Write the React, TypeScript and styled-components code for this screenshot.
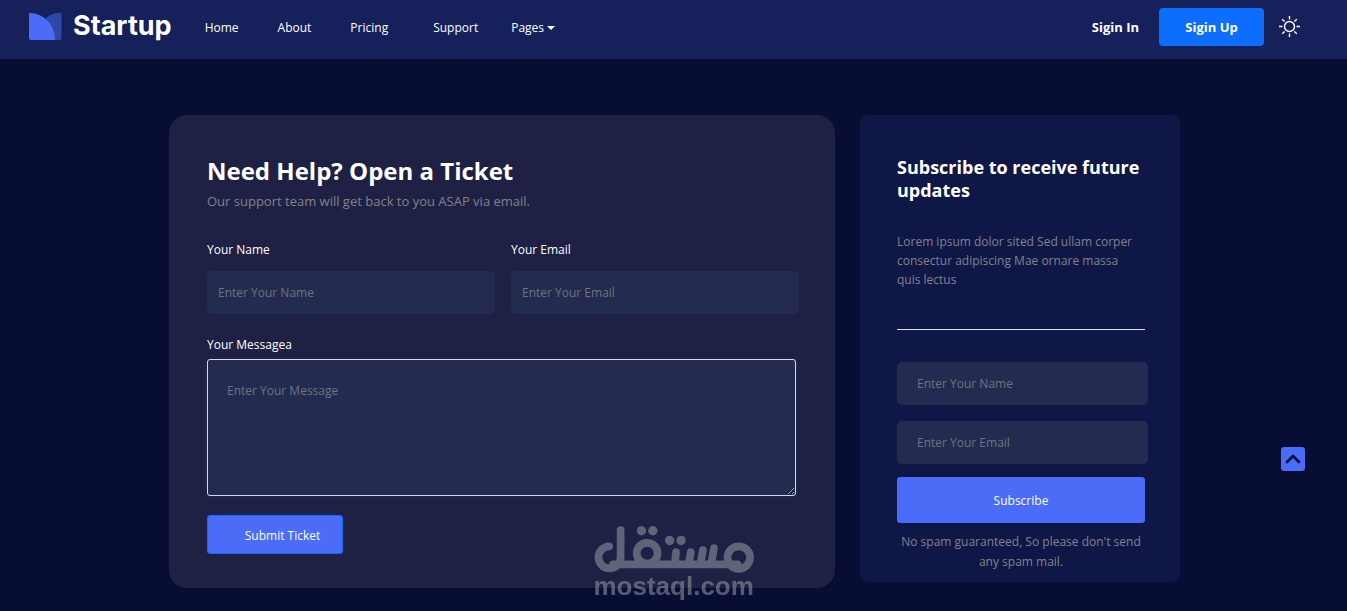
import React from "react";
import styled, { createGlobalStyle } from "styled-components";

const GlobalStyle = createGlobalStyle`
  *, *::before, *::after { box-sizing: border-box; }
  body {
    margin: 0;
    background: #080d33;
    color: #fff;
    font-family: "Segoe UI", "Open Sans", "Noto Sans", sans-serif;
    font-size: 12px;
    line-height: 20px;
  }
  h1, h2, p { margin: 0; }
  button, input, textarea { font: inherit; }
`;

const Page = styled.div`
  display: flex;
  flex-direction: column;
  min-height: 100vh;
`;

const Navbar = styled.header`
  display: flex;
  align-items: center;
  min-height: 59px;
  padding: 0 47px 5px 29px;
  background: #16205b;
`;

const Brand = styled.a`
  display: flex;
  align-items: center;
  gap: 11px;
  padding-bottom: 2px;
  color: #fff;
  font-family: Inter, sans-serif;
  font-size: 27px;
  font-weight: 700;
  line-height: 36px;
  text-decoration: none;
`;

const NavLinks = styled.nav`
  display: flex;
  align-items: center;
  margin-left: 33px;
  padding-top: 2px;
`;

const NavLink = styled.a<{ $strong?: boolean; $space?: number }>`
  display: inline-flex;
  align-items: center;
  gap: 3px;
  margin-left: ${(p) => p.$space ?? 0}px;
  color: #fff;
  font-size: ${(p) => (p.$strong ? 13 : 12)}px;
  font-weight: ${(p) => (p.$strong ? 700 : 400)};
  text-decoration: none;
`;

const Caret = styled.span`
  border: 4px solid transparent;
  border-top-color: currentColor;
  border-bottom: 0;
`;

const NavActions = styled.div`
  display: flex;
  align-items: center;
  margin-left: auto;
  gap: 20px;
`;

const SignUp = styled.button`
  width: 105px;
  height: 38px;
  border: 0;
  border-radius: 4px;
  background: #0d6efd;
  color: #fff;
  font-size: 13px;
  font-weight: 700;
  cursor: pointer;
`;

const IconButton = styled.button`
  display: flex;
  margin-left: -5px;
  padding: 0 0 2px;
  border: 0;
  background: none;
  color: #fff;
  cursor: pointer;
`;

const Main = styled.main`
  display: grid;
  grid-template-columns: minmax(0, 1fr) 320px;
  align-items: start;
  gap: 25px;
  width: 100%;
  max-width: 1013px;
  margin: 0 auto;
  padding: 56px 0 23px 2px;
`;

const TicketCard = styled.section`
  padding: 40px 36px 34px 38px;
  border-radius: 18px;
  background: #1e2144;
`;

const TicketTitle = styled.h1`
  font-size: 24px;
  font-weight: 700;
  line-height: 32px;
`;

const Muted = styled.p`
  color: #828389;
`;

const TicketLead = styled(Muted)`
  margin-top: 4px;
  font-size: 13px;
`;

const TicketForm = styled.form`
  margin-top: 28px;
`;

const FieldRow = styled.div`
  display: grid;
  grid-template-columns: 1fr 1fr;
  gap: 16px;
  margin-bottom: 20px;
`;

const Field = styled.div<{ $gap: number }>`
  display: flex;
  flex-direction: column;
  gap: ${(p) => p.$gap}px;
`;

const Label = styled.label`
  line-height: 22px;
`;

const Input = styled.input<{ $inset: number }>`
  width: 100%;
  height: 43px;
  padding: 0 ${(p) => p.$inset}px;
  border: 0;
  border-radius: 5px;
  background: #232b50;
  color: #fff;
  &::placeholder { color: #6c757d; opacity: 1; }
`;

const MessageBox = styled.textarea`
  height: 137px;
  margin-right: 3px;
  padding: 20px 19px;
  border: 1px solid #d5d8e8;
  border-radius: 3px;
  outline: 0;
  background: #232b50;
  color: #fff;
  line-height: 22px;
  box-shadow: 0 1px 5px #232b50;
  resize: vertical;
  &::placeholder { color: #6c757d; opacity: 1; }
`;

const SubmitButton = styled.button`
  width: 136px;
  height: 39px;
  margin-top: 19px;
  padding: 2px 21px 0 36px;
  border: 1px solid #0d6efd;
  border-radius: 3px;
  background: #4a6cf7;
  color: #fff;
  white-space: nowrap;
  cursor: pointer;
`;

const SubscribeCard = styled.aside`
  padding: 41px 35px 10px 37px;
  border-radius: 8px;
  background: #0f1747;
`;

const SubscribeTitle = styled.h2`
  font-size: 18px;
  font-weight: 700;
  line-height: 23px;
`;

const SubscribeText = styled(Muted)`
  margin-top: 30px;
  padding-right: 8px;
  line-height: 19px;
`;

const Divider = styled.hr`
  height: 1px;
  margin: 40px 0 32px;
  border: 0;
  background: #e4e6ee;
`;

const SubscribeForm = styled.form`
  display: flex;
  flex-direction: column;
`;

const SubscribeFields = styled.div`
  display: grid;
  gap: 16px;
  margin: 0 -3px 13px 0;
`;

const SubscribeButton = styled.button`
  height: 46px;
  padding: 2px 0 0;
  border: 0;
  border-radius: 3px;
  background: #4a6cf7;
  color: #fff;
  cursor: pointer;
`;

const SpamNote = styled(Muted)`
  margin-top: 9px;
  text-align: center;
`;

const ScrollTop = styled.a`
  position: fixed;
  right: 42px;
  bottom: 140px;
  display: flex;
  align-items: center;
  justify-content: center;
  width: 24px;
  height: 24px;
  border-radius: 3px;
  background: #4a6cf7;
  color: #080d33;
`;

const Watermark = styled.div`
  position: fixed;
  bottom: 12px;
  left: 50%;
  width: 160px;
  margin-left: -80px;
  color: #a4a6ac;
  font: 700 26px/26px "Liberation Sans", Arial, sans-serif;
  opacity: 0.5;
  pointer-events: none;
  svg { display: block; }
`;

function BrandMark() {
  return (
    <svg width="33" height="27" viewBox="0 0 33 27" aria-hidden="true">
      <path d="M17 5C20 2 25 0 31 0h1.500v25a2 2 0 0 1-2 2H16z" fill="#2e48a8" />
      <path d="M0 0c15 0 26 12 26 27H2a2 2 0 0 1-2-2z" fill="#4a6cf7" />
    </svg>
  );
}

function SunIcon() {
  return (
    <svg width="21" height="21" viewBox="0 0 21 21" fill="none" stroke="currentColor" strokeWidth="1.400" aria-hidden="true">
      <circle cx="10.500" cy="10.500" r="5" />
      <path d="M10.500 0v3.500M10.500 17.500V21M0 10.500h3.500M17.500 10.500H21M3.200 3.200l2.400 2.400M15.400 15.400l2.400 2.400M3.200 17.800l2.400-2.400M15.400 5.600l2.400-2.400" />
    </svg>
  );
}

function MostaqlMark() {
  return (
    <svg width="160" height="47" viewBox="103 138 476 140" fill="none" stroke="currentColor" strokeWidth="23" strokeLinecap="round" role="img" aria-label="مستقل">
      <path d="M148 198.500A33 33 0 1 0 182 232V150M160 252H530" />
      <circle cx="261" cy="219" r="31" />
      <circle cx="534" cy="232" r="33.500" />
      <path d="M347 216l-3 34M391 216l-6 34M427 210l-7 40M460 204l-8 46" />
      <g fill="currentColor" stroke="none">
        <circle cx="244" cy="152" r="14" />
        <circle cx="278" cy="152" r="14" />
        <circle cx="328" cy="181" r="14" />
        <circle cx="362" cy="181" r="14" />
      </g>
    </svg>
  );
}

const links = [
  { label: "Home", space: 0 },
  { label: "About", space: 39 },
  { label: "Pricing", space: 39 },
  { label: "Support", space: 45 },
];

export default function App() {
  return (
    <Page>
      <GlobalStyle />
      <Navbar>
        <Brand href="#"><BrandMark />Startup</Brand>
        <NavLinks aria-label="Main">
          {links.map(({ label, space }) => (
            <NavLink key={label} href="#" $space={space}>{label}</NavLink>
          ))}
          <NavLink href="#" $space={33}>Pages<Caret /></NavLink>
        </NavLinks>
        <NavActions>
          <NavLink href="#" $strong>Sigin In</NavLink>
          <SignUp type="button">Sigin Up</SignUp>
          <IconButton type="button" aria-label="Toggle theme"><SunIcon /></IconButton>
        </NavActions>
      </Navbar>

      <Main>
        <TicketCard>
          <TicketTitle>Need Help? Open a Ticket</TicketTitle>
          <TicketLead>Our support team will get back to you ASAP via email.</TicketLead>
          <TicketForm>
            <FieldRow>
              <Field $gap={10}>
                <Label htmlFor="name">Your Name</Label>
                <Input id="name" type="text" placeholder="Enter Your Name" $inset={11} />
              </Field>
              <Field $gap={10}>
                <Label htmlFor="email">Your Email</Label>
                <Input id="email" type="email" placeholder="Enter Your Email" $inset={11} />
              </Field>
            </FieldRow>
            <Field $gap={3}>
              <Label htmlFor="message">Your Messagea</Label>
              <MessageBox id="message" placeholder="Enter Your Message" />
            </Field>
            <SubmitButton type="button">Submit Ticket</SubmitButton>
          </TicketForm>
        </TicketCard>

        <SubscribeCard>
          <SubscribeTitle>Subscribe to receive future updates</SubscribeTitle>
          <SubscribeText>
            Lorem ipsum dolor sited Sed ullam corper consectur adipiscing Mae ornare massa quis lectus
          </SubscribeText>
          <Divider />
          <SubscribeForm>
            <SubscribeFields>
              <Input type="text" aria-label="Name" placeholder="Enter Your Name" $inset={20} />
              <Input type="email" aria-label="Email" placeholder="Enter Your Email" $inset={20} />
            </SubscribeFields>
            <SubscribeButton type="button">Subscribe</SubscribeButton>
          </SubscribeForm>
          <SpamNote>No spam guaranteed, So please don't send any spam mail.</SpamNote>
        </SubscribeCard>
      </Main>

      <ScrollTop href="#" aria-label="Back to top">
        <svg width="16" height="10" viewBox="0 0 16 10" fill="none" stroke="currentColor" strokeWidth="2.600" strokeLinecap="round" strokeLinejoin="round" aria-hidden="true">
          <path d="M2 8l6-6 6 6" />
        </svg>
      </ScrollTop>

      <Watermark>
        <MostaqlMark />
        mostaql.com
      </Watermark>
    </Page>
  );
}
